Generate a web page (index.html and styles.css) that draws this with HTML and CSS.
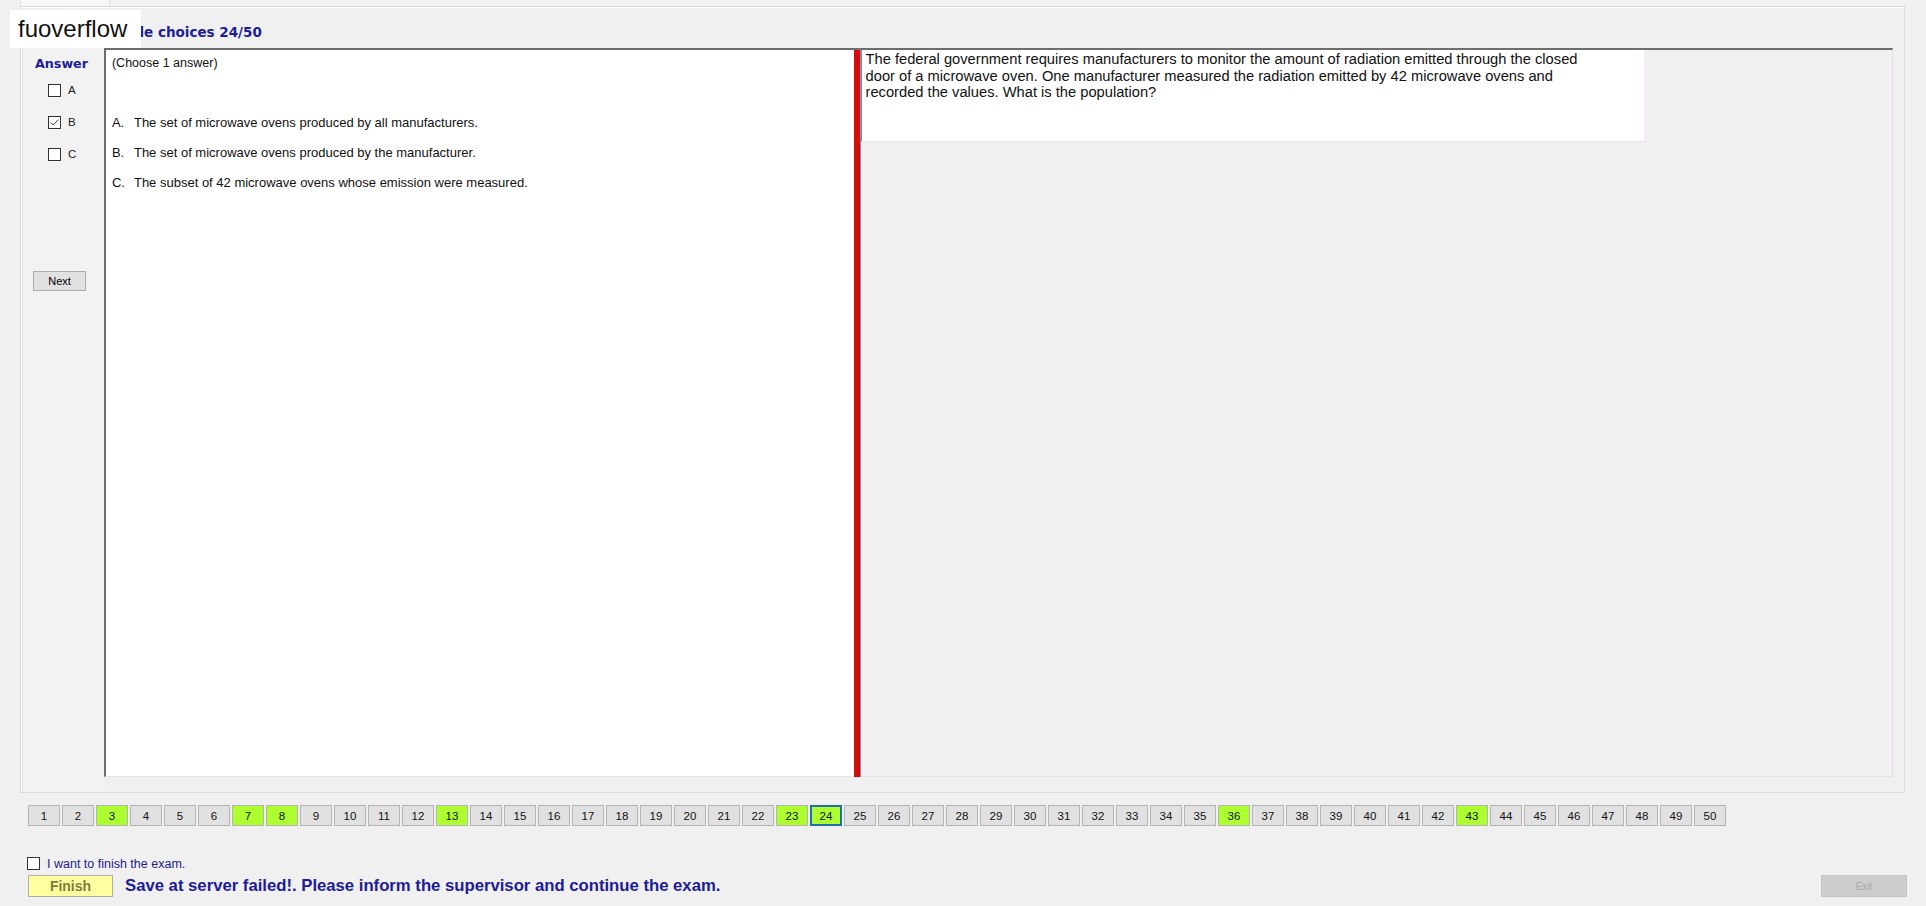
FILE: index.html
```html
<!DOCTYPE html>
<html>
<head>
<meta charset="utf-8">
<link rel="stylesheet" href="styles.css">
</head>
<body>
<div class="tabstrip"><div class="tab"></div></div>
<div class="group">
  <div class="title">Multiple choices 24/50</div>
  <div class="content">
    <div class="answer-col">
      <div class="answer-label">Answer</div>
      <div class="ans-list">
        <div class="ans"><span class="cb"></span><span>A</span></div>
        <div class="ans"><span class="cb checked"><svg viewBox="0 0 13 13" width="13" height="13"><path d="M2 6.3 L5 9.6 L11 3" fill="none" stroke="#333" stroke-width="1.1"/></svg></span><span>B</span></div>
        <div class="ans"><span class="cb"></span><span>C</span></div>
      </div>
      <button class="next">Next</button>
    </div>
    <div class="options-box">
      <div class="choose">(Choose 1 answer)</div>
      <div class="options">
        <div class="option"><span class="letter">A.</span><span>The set of microwave ovens produced by all manufacturers.</span></div>
        <div class="option"><span class="letter">B.</span><span>The set of microwave ovens produced by the manufacturer.</span></div>
        <div class="option"><span class="letter">C.</span><span>The subset of 42 microwave ovens whose emission were measured.</span></div>
      </div>
    </div>
    <div class="splitter"></div>
    <div class="right-pane">
      <div class="question-box">The federal government requires manufacturers to monitor the amount of radiation emitted through the closed<br>door of a microwave oven. One manufacturer measured the radiation emitted by 42 microwave ovens and<br>recorded the values. What is the population?</div>
    </div>
  </div>
</div>
<div class="nav">
  <button class="qbtn">1</button><button class="qbtn">2</button><button class="qbtn done">3</button><button class="qbtn">4</button><button class="qbtn">5</button><button class="qbtn">6</button><button class="qbtn done">7</button><button class="qbtn done">8</button><button class="qbtn">9</button><button class="qbtn">10</button>
  <button class="qbtn">11</button><button class="qbtn">12</button><button class="qbtn done">13</button><button class="qbtn">14</button><button class="qbtn">15</button><button class="qbtn">16</button><button class="qbtn">17</button><button class="qbtn">18</button><button class="qbtn">19</button><button class="qbtn">20</button>
  <button class="qbtn">21</button><button class="qbtn">22</button><button class="qbtn done">23</button><button class="qbtn done current">24</button><button class="qbtn">25</button><button class="qbtn">26</button><button class="qbtn">27</button><button class="qbtn">28</button><button class="qbtn">29</button><button class="qbtn">30</button>
  <button class="qbtn">31</button><button class="qbtn">32</button><button class="qbtn">33</button><button class="qbtn">34</button><button class="qbtn">35</button><button class="qbtn done">36</button><button class="qbtn">37</button><button class="qbtn">38</button><button class="qbtn">39</button><button class="qbtn">40</button>
  <button class="qbtn">41</button><button class="qbtn">42</button><button class="qbtn done">43</button><button class="qbtn">44</button><button class="qbtn">45</button><button class="qbtn">46</button><button class="qbtn">47</button><button class="qbtn">48</button><button class="qbtn">49</button><button class="qbtn">50</button>
</div>
<div class="finish-check"><span class="cb"></span><span>I want to finish the exam.</span></div>
<div class="finish-row">
  <div class="finish-left">
    <button class="finish">Finish</button>
    <span class="save-msg">Save at server failed!. Please inform the supervisor and continue the exam.</span>
  </div>
  <button class="exit">Exit</button>
</div>
<div class="watermark">fuoverflow</div>
</body>
</html>
```

FILE: styles.css
```css
html, body {
  margin: 0;
  padding: 0;
}
body {
  width: 1926px;
  height: 906px;
  background: #f0f0f0;
  font-family: "Liberation Sans", Arial, sans-serif;
  color: #000;
  position: relative;
  overflow: hidden;
}
.tabstrip {
  height: 6px;
  display: flex;
}
.tab {
  margin-left: 20px;
  width: 90px;
  height: 6px;
  box-sizing: border-box;
  border-left: 1px solid #e2e2e2;
  border-right: 1px solid #e2e2e2;
  background: #f6f6f6;
}
.group {
  margin-left: 20px;
  width: 1885px;
  height: 787px;
  box-sizing: border-box;
  border: 1px solid #dcdcdc;
  box-shadow: inset 1px 1px 0 #ffffff;
  display: flex;
  flex-direction: column;
  padding: 0 11px 0 1px;
}
.title {
  height: 41px;
  box-sizing: border-box;
  padding: 17px 0 0 69px;
  font-family: "DejaVu Sans", Verdana, sans-serif;
  font-weight: bold;
  font-size: 13.5px;
  color: #1e1e9a;
}
.content {
  display: flex;
  height: 744px;
}
.answer-col {
  width: 82px;
  background: #f2f2f2;
  border-left: 1px solid #e6e6e6;
  box-sizing: border-box;
  display: flex;
  flex-direction: column;
  align-items: flex-start;
}
.answer-label {
  margin: 8px 0 0 12px;
  font-family: "DejaVu Sans", Verdana, sans-serif;
  font-weight: bold;
  font-size: 12.7px;
  color: #1e1e9a;
  height: 16px;
  line-height: 16px;
}
.ans-list {
  margin: 11px 0 0 25px;
  display: flex;
  flex-direction: column;
  gap: 18px;
}
.ans {
  display: flex;
  align-items: center;
  gap: 7px;
  font-size: 11.5px;
  height: 14px;
  color: #222;
}
.cb {
  width: 13px;
  height: 13px;
  box-sizing: border-box;
  border: 1px solid #333;
  background: #fff;
  display: inline-flex;
  align-items: center;
  justify-content: center;
  overflow: hidden;
}
.next {
  margin: 110px 0 0 10px;
  width: 53px;
  height: 20px;
  box-sizing: border-box;
  border: 1px solid #adadad;
  background: #e1e1e1;
  font-family: "Liberation Sans", Arial, sans-serif;
  font-size: 11px;
  color: #000;
  padding: 0;
}
.options-box {
  width: 750px;
  height: 729px;
  box-sizing: border-box;
  background: #fff;
  border-top: 2px solid #6d6d6d;
  border-left: 2px solid #6d6d6d;
  border-bottom: 1px solid #e3e3e3;
  padding: 5px 0 0 6px;
  font-size: 13px;
  color: #111;
}
.choose {
  height: 16px;
  line-height: 16px;
  font-size: 12.5px;
}
.options {
  margin-top: 45px;
  display: flex;
  flex-direction: column;
  gap: 16px;
}
.option {
  display: flex;
  height: 14px;
  line-height: 14px;
}
.letter {
  width: 22px;
}
.splitter {
  width: 7px;
  height: 729px;
  box-sizing: border-box;
  background: #d20d0d;
  border-top: 2px solid #6d6d6d;
  border-right: 1px solid #8a8aa8;
}
.right-pane {
  width: 1033px;
  height: 729px;
  box-sizing: border-box;
  background: #f1eff1;
  border-top: 2px solid #6d6d6d;
  border-right: 1px solid #e0e0e0;
  border-bottom: 1px solid #e3e3e3;
}
.question-box {
  width: 783px;
  height: 92px;
  box-sizing: border-box;
  background: #fff;
  border-left: 1px solid #8a8a8a;
  border-bottom: 1px solid #e6e6e6;
  padding: 1px 0 0 4px;
  font-size: 14.7px;
  line-height: 16.5px;
  color: #111;
}
.nav {
  display: flex;
  gap: 2px;
  margin: 12px 0 0 28px;
}
.qbtn {
  width: 32px;
  height: 21px;
  box-sizing: border-box;
  border: 1px solid #b4b4b4;
  background: #e1e1e1;
  font-family: "Liberation Sans", Arial, sans-serif;
  font-size: 11.5px;
  color: #111;
  padding: 0;
}
.qbtn.done {
  background: #adff2f;
}
.qbtn.current {
  border: 2px solid #1f6fb0;
}
.finish-check {
  display: flex;
  align-items: center;
  gap: 7px;
  margin: 31px 0 0 27px;
  height: 13px;
  font-size: 12.5px;
  color: #1c1c8c;
}
.finish-row {
  display: flex;
  justify-content: space-between;
  align-items: center;
  margin: 5px 19px 0 28px;
  height: 22px;
}
.finish-left {
  display: flex;
  align-items: center;
  gap: 12px;
}
.finish {
  width: 85px;
  height: 22px;
  box-sizing: border-box;
  border: 1px solid #b0b0a0;
  background: #ffffa0;
  font-family: "Liberation Sans", Arial, sans-serif;
  font-weight: bold;
  font-size: 14px;
  color: #7d7d3e;
  padding: 0;
}
.save-msg {
  font-family: "Liberation Sans", Arial, sans-serif;
  font-weight: bold;
  font-size: 16.7px;
  color: #1c1c9a;
}
.exit {
  width: 86px;
  height: 22px;
  box-sizing: border-box;
  border: 1px solid #c4c4c4;
  background: #cdcdcd;
  font-family: "Liberation Sans", Arial, sans-serif;
  font-size: 10px;
  color: #a8a8a8;
  padding: 0;
}
.watermark {
  position: absolute;
  left: 10px;
  top: 10px;
  width: 131px;
  height: 38px;
  box-sizing: border-box;
  background: #fff;
  padding-left: 8px;
  font-family: "Liberation Sans", Arial, sans-serif;
  font-size: 24px;
  line-height: 38px;
  color: #111;
}
```
